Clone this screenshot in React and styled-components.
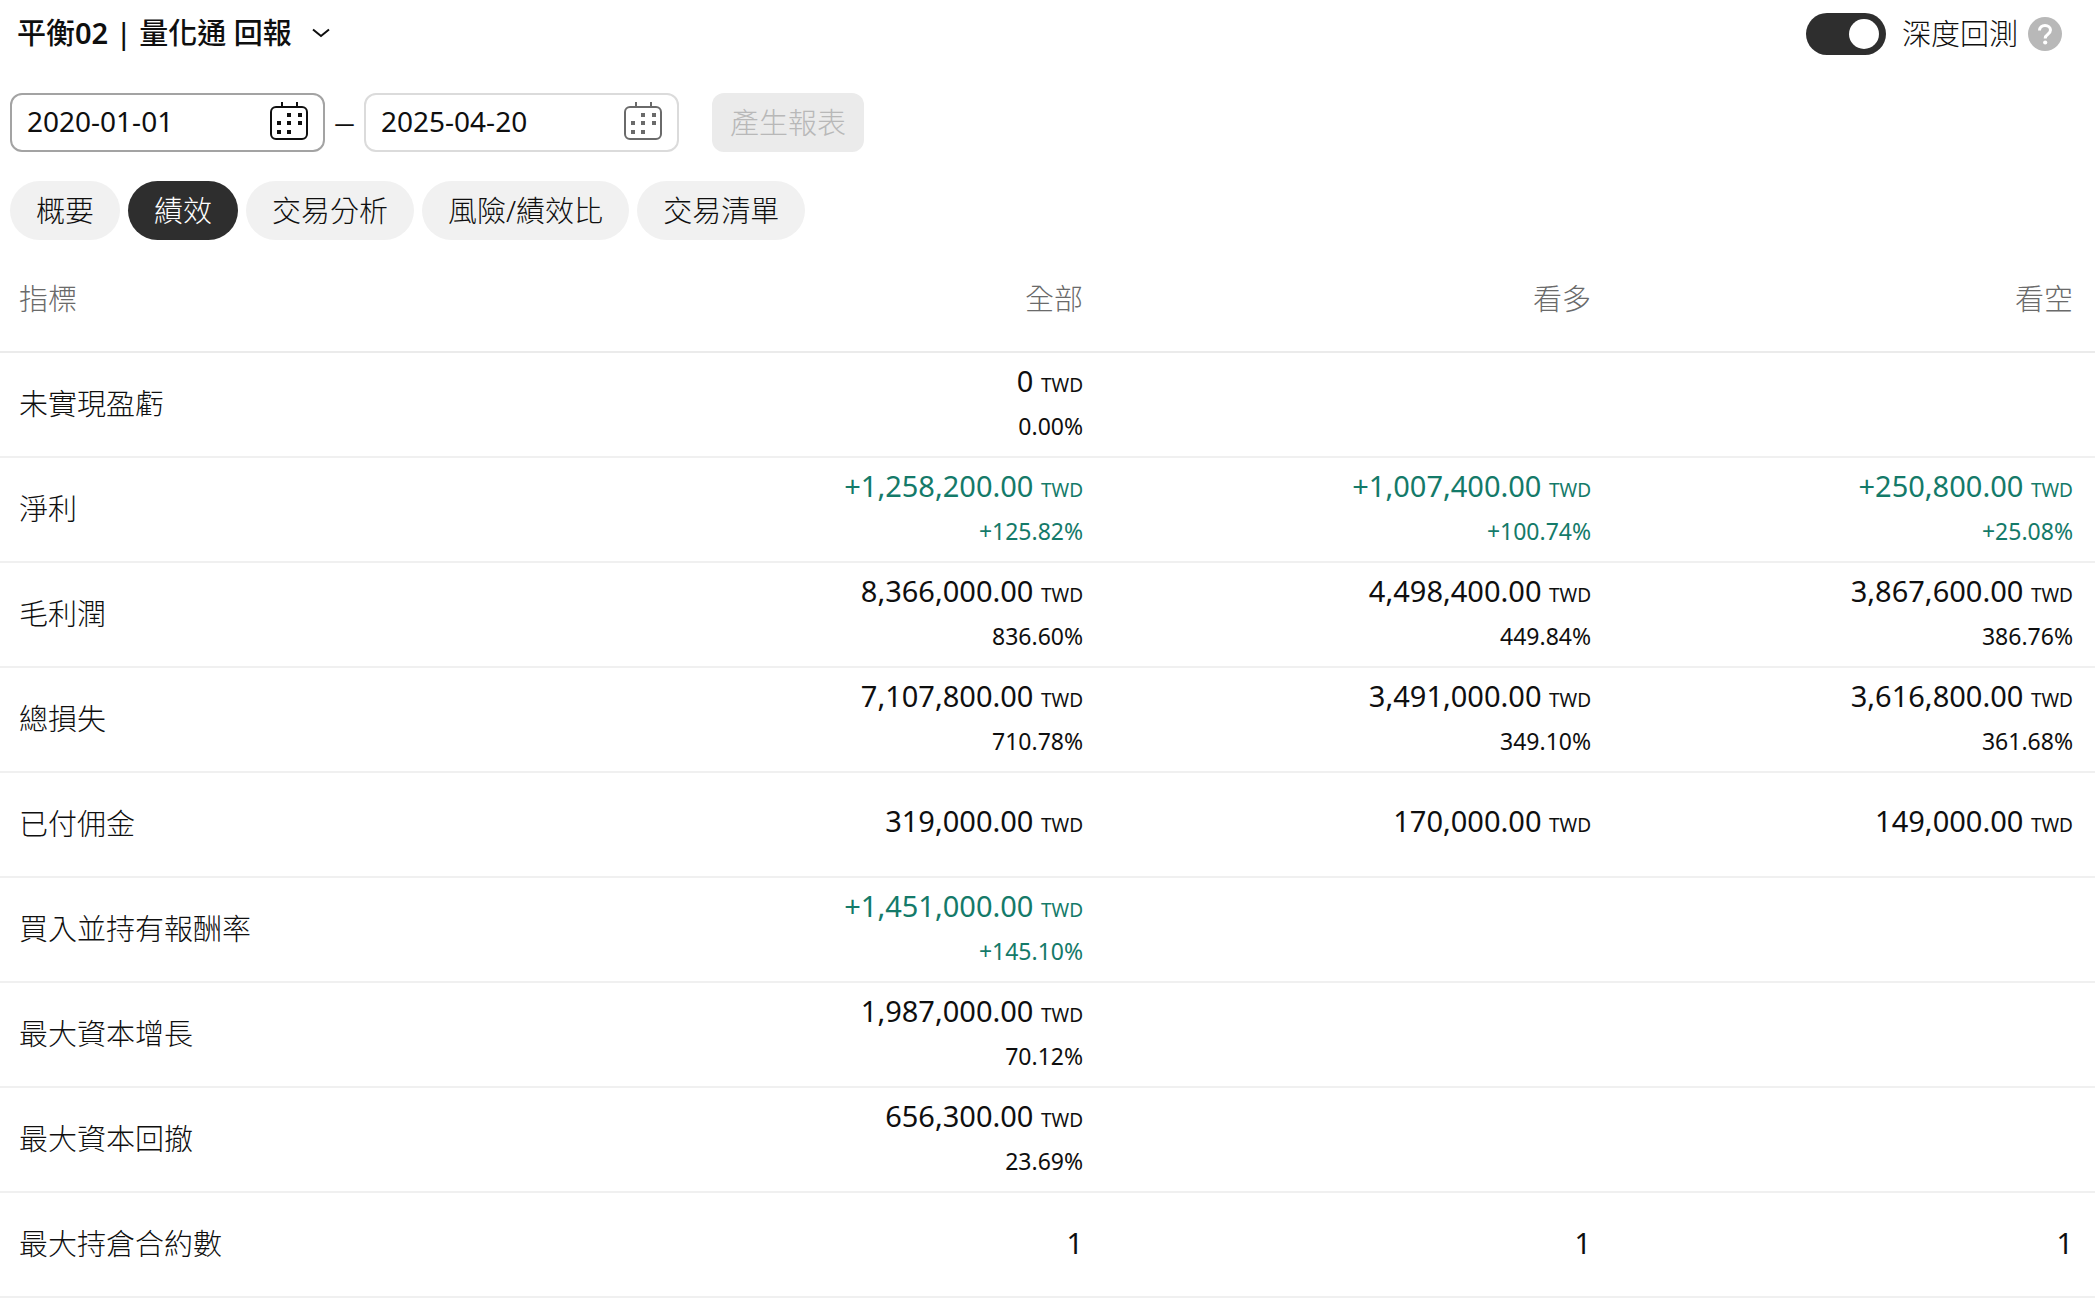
import React, { useState } from 'react'
import styled, { createGlobalStyle } from 'styled-components'

const GlobalStyle = createGlobalStyle`
    * {
        box-sizing: border-box;
    }

    body {
        margin: 0;
        background: #ffffff;
        color: #0f0f0f;
        font-family: "Noto Sans", "Noto Sans CJK TC", sans-serif;
        font-size: 29px;
        font-weight: 300;
    }

    button, input {
        font: inherit;
        color: inherit;
    }
`;

const Page = styled.main`
    display: flex;
    flex-direction: column;
`;

const Header = styled.header`
    display: flex;
    align-items: center;
    justify-content: space-between;
    height: 68px;
    padding: 0 33px 0 17px;
`;

const TitleButton = styled.button`
    display: flex;
    align-items: center;
    gap: 20px;
    padding: 0 0 2px;
    border: 0;
    background: none;
    font-weight: 500;
    line-height: 40px;
    cursor: pointer;
`;

const TitleNumber = styled.span`
    font-weight: 600;
`;

const DeepTest = styled.div`
    display: flex;
    align-items: center;
    gap: 10px;
`;

const SwitchLabel = styled.label`
    display: flex;
    align-items: center;
    gap: 16px;
    line-height: 40px;
`;

const Switch = styled.input`
    appearance: none;
    display: flex;
    align-items: center;
    justify-content: ${props => props.checked ? 'flex-end' : 'flex-start'};
    width: 80px;
    height: 42px;
    margin: 0;
    padding: 0 7px;
    border-radius: 21px;
    background: ${props => props.checked ? '#2e2e2e' : '#b8b8b8'};

    &::before {
        content: "";
        width: 30px;
        height: 30px;
        border-radius: 50%;
        background: #ffffff;
    }
`;

const IconButton = styled.button`
    display: flex;
    padding: 0;
    border: 0;
    background: none;
    color: ${props => props.$color};
    cursor: pointer;
`;

const Controls = styled.div`
    display: flex;
    align-items: center;
    padding: 25px 10px 0;
`;

const DateBox = styled.div`
    display: flex;
    align-items: center;
    justify-content: space-between;
    width: 315px;
    height: 59px;
    padding: 0 15px 4px;
    border: 2px solid ${props => props.$active ? '#a3a3a3' : '#dbdbdb'};
    border-radius: 12px;
`;

const DateInput = styled.input`
    width: 200px;
    padding: 0;
    border: 0;
    outline: 0;
    background: none;
    font-size: 28px;
    font-weight: 400;
`;

const Dash = styled.span`
    width: 39px;
    text-align: center;
    font-size: 20px;
    font-weight: 500;
`;

const ReportButton = styled.button`
    height: 59px;
    margin-left: 33px;
    padding: 0 18px 4px;
    border: 0;
    border-radius: 12px;
    background: #ebebeb;
    color: #b8b8b8;
`;

const Tabs = styled.nav`
    display: flex;
    gap: 8px;
    padding: 29px 10px 5px;
`;

const Tab = styled.button`
    height: 59px;
    padding: 0 26px 4px;
    border: 0;
    border-radius: 30px;
    background: ${props => props.$active ? '#2e2e2e' : '#f1f1f1'};
    color: ${props => props.$active ? '#ffffff' : '#0f0f0f'};
    cursor: pointer;
`;

const Table = styled.table`
    width: 100%;
    table-layout: fixed;
    border-collapse: separate;
    border-spacing: 0;
`;

const Column = styled.col`
    width: ${props => props.$width};
`;

const HeadCell = styled.th`
    height: 108px;
    padding: 0 22px 2px 19px;
    border-bottom: 2px solid #ebebeb;
    color: #6a6a6a;
    font-weight: 300;
    text-align: ${props => props.$left ? 'left' : 'right'};
`;

const NameCell = styled.th`
    height: 105px;
    padding: 0 19px 6px;
    border-bottom: 2px solid #f0f0f0;
    font-weight: 300;
    text-align: left;
`;

const ValueCell = styled.td`
    padding: 0 22px 4px;
    border-bottom: 2px solid #f0f0f0;
    color: ${props => props.$positive ? '#147a69' : '#0f0f0f'};
    font-weight: 400;
    text-align: right;
    white-space: nowrap;
`;

const Amount = styled.div`
    font-size: 29px;
    line-height: 42px;
`;

const Currency = styled.span`
    font-size: 19px;
`;

const Percent = styled.div`
    font-size: 23px;
    line-height: 40px;
`;

const tabs = ['概要', '績效', '交易分析', '風險/績效比', '交易清單']

const rows = [
    { name: '未實現盈虧', values: [['0', '0.00%'], null, null] },
    { name: '淨利', values: [['+1,258,200.00', '+125.82%'], ['+1,007,400.00', '+100.74%'], ['+250,800.00', '+25.08%']] },
    { name: '毛利潤', values: [['8,366,000.00', '836.60%'], ['4,498,400.00', '449.84%'], ['3,867,600.00', '386.76%']] },
    { name: '總損失', values: [['7,107,800.00', '710.78%'], ['3,491,000.00', '349.10%'], ['3,616,800.00', '361.68%']] },
    { name: '已付佣金', values: [['319,000.00'], ['170,000.00'], ['149,000.00']] },
    { name: '買入並持有報酬率', values: [['+1,451,000.00', '+145.10%'], null, null] },
    { name: '最大資本增長', values: [['1,987,000.00', '70.12%'], null, null] },
    { name: '最大資本回撤', values: [['656,300.00', '23.69%'], null, null] },
    { name: '最大持倉合約數', plain: true, values: [['1'], ['1'], ['1']] },
]

const ChevronIcon = () => (
    <svg width="18" height="10" viewBox="0 0 18 10" fill="none" stroke="currentColor" strokeWidth="2" aria-hidden="true">
        <path d="M1 1.5l8 6.5 8-6.5" />
    </svg>
)

const CalendarIcon = () => (
    <svg width="38" height="38" viewBox="0 0 38 38" fill="none" aria-hidden="true">
        <rect x="1" y="5" width="36" height="32" rx="5" stroke="currentColor" strokeWidth="2" />
        <path d="M12 0v5M27 0v5" stroke="currentColor" strokeWidth="2" />
        <path
            d="M17 11h4v4h-4zM28 11h4v4h-4zM7 19h4v4h-4zM17 19h4v4h-4zM28 19h4v4h-4zM7 28h4v4h-4zM17 28h4v4h-4z"
            fill="currentColor"
        />
    </svg>
)

const HelpIcon = () => (
    <svg width="34" height="34" viewBox="0 0 34 34" fill="none" aria-hidden="true">
        <circle cx="17" cy="17" r="17" fill="currentColor" />
        <path
            d="M11.5 13.5c0-3 2.300-5 5.500-5s5.500 1.900 5.500 4.600c0 2-1 3-2.600 4.200-1.700 1.200-2.700 2-2.700 4.200"
            stroke="#ffffff"
            strokeWidth="3"
        />
        <circle cx="17.200" cy="25.500" r="2.100" fill="#ffffff" />
    </svg>
)

const Value = ({ value, plain }) => {
    if (!value) {
        return <ValueCell />
    }
    const [amount, percent] = value
    return (
        <ValueCell $positive={amount.startsWith('+')}>
            <Amount>
                {amount}{!plain && <> <Currency>TWD</Currency></>}
            </Amount>
            {percent && <Percent>{percent}</Percent>}
        </ValueCell>
    )
}

const App = () => {
    const [deep, setDeep] = useState(true)
    const [from, setFrom] = useState('2020-01-01')
    const [to, setTo] = useState('2025-04-20')
    const [active, setActive] = useState('績效')

    return (
        <Page lang="zh-Hant">
            <GlobalStyle />
            <Header>
                <TitleButton type="button">
                    <span>平衡<TitleNumber>02</TitleNumber> | 量化通 回報</span>
                    <ChevronIcon />
                </TitleButton>
                <DeepTest>
                    <SwitchLabel>
                        <Switch type="checkbox" role="switch" checked={deep} onChange={e => setDeep(e.target.checked)} />
                        深度回測
                    </SwitchLabel>
                    <IconButton type="button" $color="#b8b8b8" aria-label="說明">
                        <HelpIcon />
                    </IconButton>
                </DeepTest>
            </Header>

            <Controls>
                <DateBox $active>
                    <DateInput aria-label="開始日期" value={from} onChange={e => setFrom(e.target.value)} />
                    <IconButton type="button" $color="#0f0f0f" aria-label="選擇開始日期">
                        <CalendarIcon />
                    </IconButton>
                </DateBox>
                <Dash>—</Dash>
                <DateBox>
                    <DateInput aria-label="結束日期" value={to} onChange={e => setTo(e.target.value)} />
                    <IconButton type="button" $color="#6a6a6a" aria-label="選擇結束日期">
                        <CalendarIcon />
                    </IconButton>
                </DateBox>
                <ReportButton type="button" disabled>產生報表</ReportButton>
            </Controls>

            <Tabs>
                {tabs.map(tab => (
                    <Tab key={tab} type="button" $active={tab === active} onClick={() => setActive(tab)}>
                        {tab}
                    </Tab>
                ))}
            </Tabs>

            <Table>
                <colgroup>
                    <Column $width="28.5%" />
                    <Column $width="24.25%" />
                    <Column $width="24.25%" />
                    <Column $width="23%" />
                </colgroup>
                <thead>
                    <tr>
                        <HeadCell scope="col" $left>指標</HeadCell>
                        <HeadCell scope="col">全部</HeadCell>
                        <HeadCell scope="col">看多</HeadCell>
                        <HeadCell scope="col">看空</HeadCell>
                    </tr>
                </thead>
                <tbody>
                    {rows.map(row => (
                        <tr key={row.name}>
                            <NameCell scope="row">{row.name}</NameCell>
                            {row.values.map((value, i) => (
                                <Value key={i} value={value} plain={row.plain} />
                            ))}
                        </tr>
                    ))}
                </tbody>
            </Table>
        </Page>
    )
}

export default App
